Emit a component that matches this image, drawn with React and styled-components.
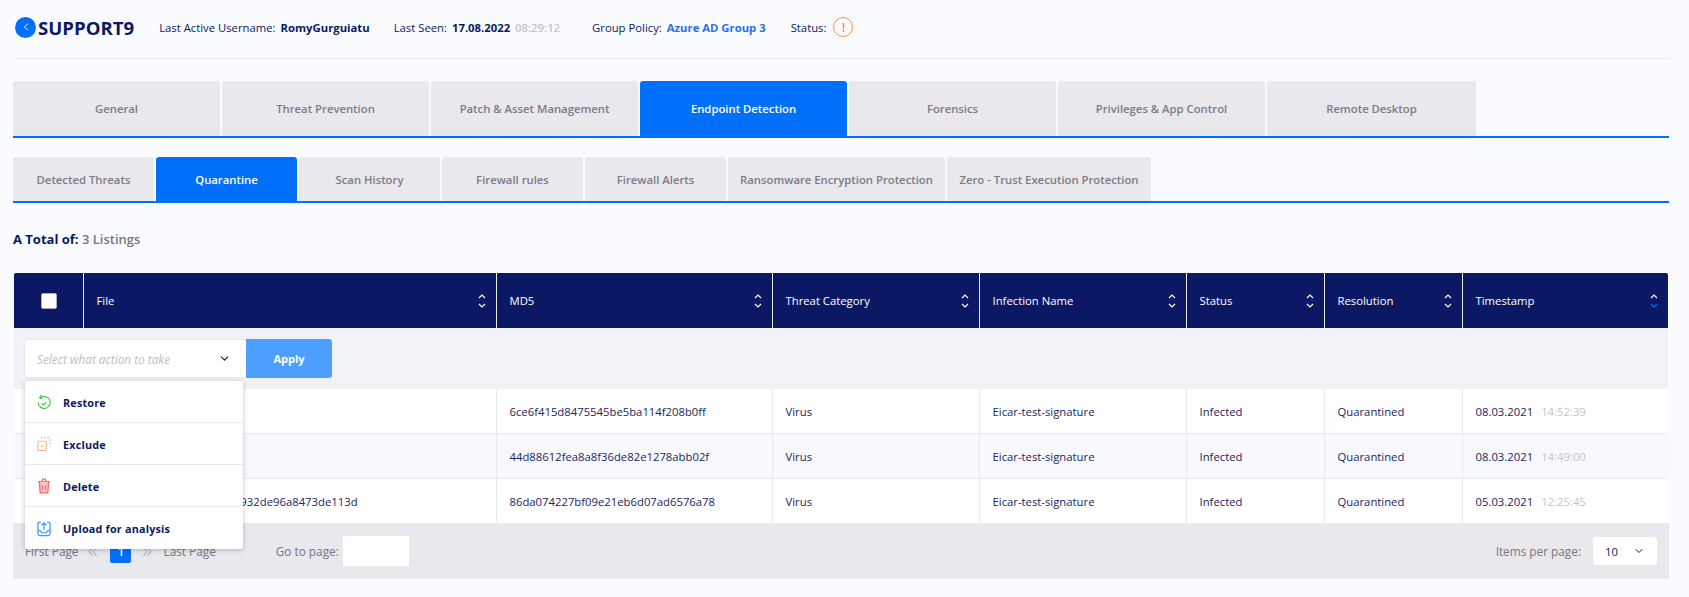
import React from "react";
import styled, { createGlobalStyle } from "styled-components";
import { FiChevronDown, FiChevronLeft } from "react-icons/fi";

const COLUMNS = "69px 413px 276px 207px 207px 138px 138px 206px";

const mainTabs = [
  { label: "General", width: 207 },
  { label: "Threat Prevention", width: 207 },
  { label: "Patch & Asset Management", width: 207 },
  { label: "Endpoint Detection", width: 207, active: true },
  { label: "Forensics", width: 207 },
  { label: "Privileges & App Control", width: 207 },
  { label: "Remote Desktop", width: 209 },
];

const subTabs = [
  { label: "Detected Threats", width: 141 },
  { label: "Quarantine", width: 141, active: true },
  { label: "Scan History", width: 141 },
  { label: "Firewall rules", width: 141 },
  { label: "Firewall Alerts", width: 141 },
  { label: "Ransomware Encryption Protection", width: 217 },
  { label: "Zero - Trust Execution Protection", width: 204 },
];

const headers = ["File", "MD5", "Threat Category", "Infection Name", "Status", "Resolution", "Timestamp"];

const rows = [
  { file: "eicar.com", md5: "6ce6f415d8475545be5ba114f208b0ff", date: "08.03.2021", time: "14:52:39" },
  { file: "eicar.com.txt", md5: "44d88612fea8a8f36de82e1278abb02f", date: "08.03.2021", time: "14:49:00" },
  { file: "3395856ce81f2b73a1c47e5932de96a8473de113d", md5: "86da074227bf09e21eb6d07ad6576a78", date: "05.03.2021", time: "12:25:45" },
];

const GlobalStyle = createGlobalStyle`
  html, body {
    margin: 0;
    background: #fafbff;
    font-family: "Open Sans", "Liberation Sans", sans-serif;
    color: #0b1964;
  }
`;

const Page = styled.div`
  width: 1656px;
  height: 597px;
  margin-left: 13px;
`;

const Header = styled.header`
  display: flex;
  align-items: center;
  box-sizing: border-box;
  height: 59px;
  padding-bottom: 4px;
  margin-bottom: 22px;
  border-bottom: 1px solid #e9eaf0;
  font-size: 11.3px;
`;

const BackButton = styled.span`
  display: flex;
  align-items: center;
  justify-content: center;
  width: 21px;
  height: 21px;
  margin-left: 2px;
  border-radius: 50%;
  background: #0070fa;
  color: #fff;
  font-size: 12px;
`;

const Title = styled.h1`
  margin: 0 25px 0 2px;
  font-size: 18.6px;
  font-weight: 700;
  color: #0b1964;
`;

const Info = styled.span`
  display: flex;
  align-items: center;
  gap: 5px;
  margin-right: ${(p) => p.$after || 0}px;
`;

const Strong = styled.b`
  font-weight: 700;
  color: ${(p) => p.$color || "#0b1964"};
`;

const Faint = styled.span`
  color: #c4c4cc;
  font-weight: ${(p) => p.$weight || 400};
`;

const StatusIcon = styled.span`
  display: flex;
  align-items: center;
  justify-content: center;
  box-sizing: border-box;
  width: 20px;
  height: 20px;
  margin-left: 2px;
  border: 1.5px solid #ff8f3f;
  border-radius: 50%;
  color: #ff8f3f;
  font-size: 13px;
  font-weight: 600;
`;

const TabBar = styled.nav`
  display: flex;
  gap: 2px;
  border-bottom: 2px solid #0070fa;
  margin-bottom: ${(p) => p.$after}px;
`;

const Tab = styled.div`
  display: flex;
  align-items: center;
  justify-content: center;
  width: ${(p) => p.$width}px;
  height: ${(p) => p.$height}px;
  border-radius: 3px 3px 0 0;
  background: ${(p) => (p.$active ? "#0070fa" : "#e9e8ec")};
  color: ${(p) => (p.$active ? "#fff" : "#7d7b88")};
  font-size: 11.3px;
  font-weight: 600;
  white-space: nowrap;
`;

const TotalLine = styled.p`
  margin: 1px 0 25px;
  height: 18px;
  line-height: 18px;
  font-size: 13px;
  font-weight: 700;
  color: #0b1964;
  span {
    color: #777582;
    font-weight: 600;
  }
`;

const Table = styled.section`
  position: relative;
`;

const TableBody = styled.div`
  margin: 0 1px;
`;

const HeaderRow = styled.div`
  display: grid;
  grid-template-columns: ${COLUMNS};
  height: 55px;
  border-radius: 2px 2px 0 0;
  background: #0b1964;
`;

const HeaderCell = styled.div`
  display: flex;
  align-items: center;
  justify-content: space-between;
  padding: 0 9px 0 12.5px;
  border-left: 1px solid #e9eaf0;
  color: #fff;
  font-size: 11.3px;
  font-weight: 500;
`;

const CheckCell = styled.div`
  display: flex;
  align-items: center;
  justify-content: center;
`;

const Check = styled.span`
  box-sizing: border-box;
  width: 16px;
  height: 16px;
  border: 1px solid #a9adc6;
  border-radius: 2px;
  background: #fff;
`;

const ActionRow = styled.div`
  display: flex;
  align-items: center;
  height: 61px;
  padding-left: 11px;
  background: #f1f2f6;
`;

const ActionSelect = styled.div`
  display: flex;
  align-items: center;
  justify-content: space-between;
  box-sizing: border-box;
  width: 221px;
  height: 37px;
  padding: 0 15px 0 12px;
  border-radius: 3px 0 0 3px;
  background: #fff;
  box-shadow: 0 0 2px rgba(11, 25, 100, 0.15);
  font-size: 11.8px;
  font-style: italic;
  color: #bdbdc6;
  svg {
    color: #0b1964;
    font-size: 13px;
  }
`;

const ApplyButton = styled.button`
  width: 86px;
  height: 39px;
  border: 0;
  border-radius: 0 3px 3px 0;
  background: #4d9fff;
  color: #fff;
  font-family: inherit;
  font-size: 11px;
  font-weight: 700;
`;

const Row = styled.div`
  display: grid;
  grid-template-columns: ${COLUMNS};
  height: ${(p) => (p.$last ? 44 : 45)}px;
  box-sizing: border-box;
  background: ${(p) => (p.$even ? "#f8f9fe" : "#fff")};
  border-bottom: ${(p) => (p.$last ? 0 : "1px solid #e9eaf0")};
`;

const Cell = styled.div`
  display: flex;
  align-items: center;
  gap: 8px;
  padding-left: 12.5px;
  border-left: ${(p) => (p.$first ? 0 : "1px solid #e9eaf0")};
  font-size: 11.3px;
  color: #1a2560;
  white-space: nowrap;
`;

const Menu = styled.div`
  position: absolute;
  top: 108px;
  left: 12px;
  width: 218px;
  border-radius: 2px;
  background: #fff;
  box-shadow: 0 1px 5px rgba(11, 25, 100, 0.25);
`;

const MenuItem = styled.div`
  display: flex;
  align-items: center;
  gap: 12px;
  box-sizing: border-box;
  height: 42px;
  padding: 1px 0 0 12px;
  border-bottom: ${(p) => (p.$last ? 0 : "1px solid #e9eaf0")};
  font-size: 10.8px;
  font-weight: 700;
  letter-spacing: 0.2px;
  color: #0b1964;
`;

const Footer = styled.footer`
  display: flex;
  align-items: center;
  height: 56px;
  padding: 0 12px;
  background: #e9e8ec;
  font-size: 11.8px;
  color: #777582;
`;

const PageButton = styled.span`
  display: flex;
  align-items: center;
  justify-content: center;
  width: 21px;
  height: 23px;
  margin: 0 10px 0 11px;
  border-radius: 2px;
  background: #0070fa;
  color: #fff;
  font-weight: 600;
`;

const FirstPage = styled.span`
  margin-right: 10px;
`;

const LastPage = styled.span`
  margin: 0 60px 0 11px;
`;

const GoInput = styled.span`
  width: 66px;
  height: 30px;
  margin-left: 4px;
  background: #fff;
`;

const PerPage = styled.div`
  display: flex;
  align-items: center;
  gap: 12px;
  margin-left: auto;
`;

const PerPageSelect = styled.div`
  display: flex;
  align-items: center;
  justify-content: space-between;
  box-sizing: border-box;
  width: 64px;
  height: 28px;
  padding: 0 12px;
  border-radius: 3px;
  background: #fff;
  color: #0b1964;
  font-size: 11.3px;
  svg {
    font-size: 12px;
  }
`;

function SortIcon({ active }) {
  return (
    <svg width="10" height="18" viewBox="0 0 10 18" fill="none" strokeWidth="1.2">
      <path d="M2 6l3-3 3 3" stroke="#fff" />
      <path d="M2 12l3 3 3-3" stroke={active ? "#0070fa" : "#fff"} />
    </svg>
  );
}

function PageArrows({ flip }) {
  return (
    <svg width="11" height="11" viewBox="0 0 11 11" fill="none" stroke="#a3a3ad" strokeWidth="1" style={flip ? { transform: "scaleX(-1)" } : undefined}>
      <path d="M5.500 1L1 5.500l3.500 4.500M9.500 1L5 5.500l3.500 4.500" />
    </svg>
  );
}

function RestoreIcon() {
  return (
    <svg width="14" height="16" viewBox="0 0 14 16" fill="none" stroke="#3fc43f" strokeWidth="1.1">
      <path d="M3 4.200A6 6 0 1 1 1.200 8.500" />
      <path d="M4.600 0.800L2.600 3.600l3 1.400" />
      <path d="M4.800 9.300l1.600 1.600 2.800-2.800" />
    </svg>
  );
}

function ExcludeIcon() {
  return (
    <svg width="14" height="16" viewBox="0 0 15 16" fill="none" stroke="#ffb48a" strokeWidth="1.2">
      <rect x="1" y="5" width="9" height="10" rx="1" />
      <path d="M4 8.600l3 3M7 8.600l-3 3" strokeWidth="0.9" />
      <path d="M4 1.200h8.500a1.500 1.500 0 0 1 1.500 1.500v8" strokeDasharray="2 1.6" />
    </svg>
  );
}

function DeleteIcon() {
  return (
    <svg width="14" height="16" viewBox="0 0 14 16" fill="none" stroke="#ff6464" strokeWidth="1.3">
      <path d="M1 3.600h12M5 3.200l.6-2h2.800l.6 2" />
      <path d="M2.400 3.800l.8 11h7.600l.8-11" fill="#ffc4c4" />
      <path d="M5.500 7v5M8.500 7v5" strokeWidth="1" />
    </svg>
  );
}

function UploadIcon() {
  return (
    <svg width="14" height="16" viewBox="0 0 15 16" fill="none" stroke="#3f97ff" strokeWidth="1.3">
      <path d="M4 1H2a1 1 0 0 0-1 1v11a2 2 0 0 0 2 2h9a2 2 0 0 0 2-2V2a1 1 0 0 0-1-1h-2" />
      <path d="M1 10h3l1 2h5l1-2h3" />
      <path d="M7.500 9V1.500M4.800 4l2.700-2.700L10.200 4" />
    </svg>
  );
}

export default function App() {
  return (
    <Page>
      <GlobalStyle />
      <Header>
        <BackButton>
          <FiChevronLeft />
        </BackButton>
        <Title>SUPPORT9</Title>
        <Info $after={24}>
          Last Active Username: <Strong>RomyGurguiatu</Strong>
        </Info>
        <Info $after={32}>
          Last Seen: <Strong>17.08.2022</Strong> <Faint $weight={600}>08:29:12</Faint>
        </Info>
        <Info $after={25}>
          Group Policy: <Strong $color="#2a6fe8">Azure AD Group 3</Strong>
        </Info>
        <Info>
          Status: <StatusIcon>!</StatusIcon>
        </Info>
      </Header>

      <TabBar $after={19}>
        {mainTabs.map((tab) => (
          <Tab key={tab.label} $width={tab.width} $height={55} $active={tab.active}>
            {tab.label}
          </Tab>
        ))}
      </TabBar>

      <TabBar $after={27}>
        {subTabs.map((tab) => (
          <Tab key={tab.label} $width={tab.width} $height={44} $active={tab.active}>
            {tab.label}
          </Tab>
        ))}
      </TabBar>

      <TotalLine>
        A Total of: <span>3 Listings</span>
      </TotalLine>

      <Table>
        <TableBody>
          <HeaderRow>
            <CheckCell>
              <Check />
            </CheckCell>
            {headers.map((title) => (
              <HeaderCell key={title}>
                {title}
                <SortIcon active={title === "Timestamp"} />
              </HeaderCell>
            ))}
          </HeaderRow>

          <ActionRow>
            <ActionSelect>
              Select what action to take
              <FiChevronDown />
            </ActionSelect>
            <ApplyButton>Apply</ApplyButton>
          </ActionRow>

          {rows.map((row, index) => (
            <Row key={row.md5} $even={index === 1} $last={index === rows.length - 1}>
              <Cell $first />
              <Cell>{row.file}</Cell>
              <Cell>{row.md5}</Cell>
              <Cell>Virus</Cell>
              <Cell>Eicar-test-signature</Cell>
              <Cell>Infected</Cell>
              <Cell>Quarantined</Cell>
              <Cell>
                {row.date} <Faint>{row.time}</Faint>
              </Cell>
            </Row>
          ))}
        </TableBody>

        <Footer>
          <FirstPage>First Page</FirstPage>
          <PageArrows />
          <PageButton>1</PageButton>
          <PageArrows flip />
          <LastPage>Last Page</LastPage>
          Go to page:
          <GoInput />
          <PerPage>
            Items per page:
            <PerPageSelect>
              10
              <FiChevronDown />
            </PerPageSelect>
          </PerPage>
        </Footer>

        <Menu>
          <MenuItem>
            <RestoreIcon />
            Restore
          </MenuItem>
          <MenuItem>
            <ExcludeIcon />
            Exclude
          </MenuItem>
          <MenuItem>
            <DeleteIcon />
            Delete
          </MenuItem>
          <MenuItem $last>
            <UploadIcon />
            Upload for analysis
          </MenuItem>
        </Menu>
      </Table>
    </Page>
  );
}
